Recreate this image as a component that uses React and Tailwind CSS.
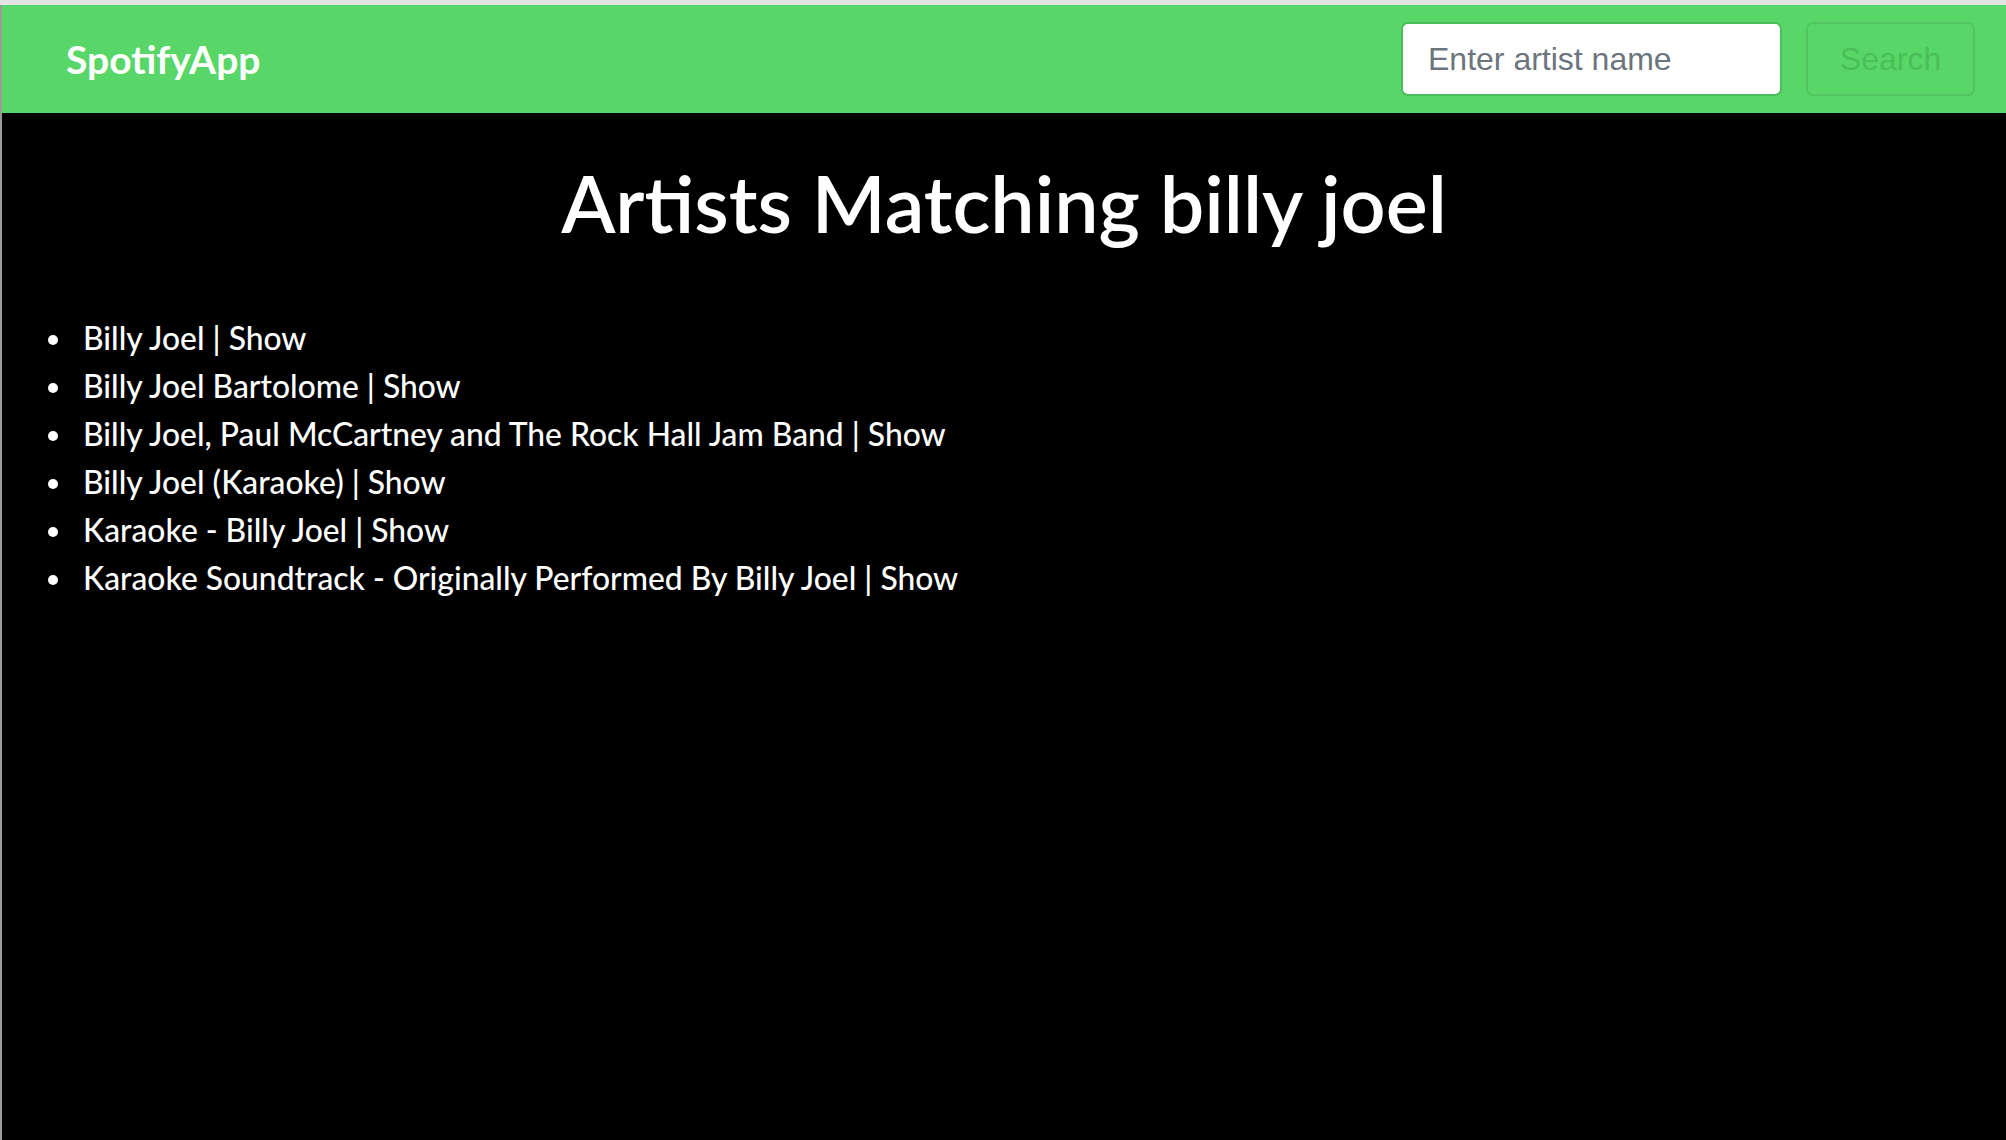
import React from 'react';

const artists = [
  'Billy Joel',
  'Billy Joel Bartolome',
  'Billy Joel, Paul McCartney and The Rock Hall Jam Band',
  'Billy Joel (Karaoke)',
  'Karaoke - Billy Joel',
  'Karaoke Soundtrack - Originally Performed By Billy Joel',
];

const App = () => {
  return (
    <div className="min-h-screen bg-black flex flex-col">
      <div className="h-[5px] bg-[#e3e3e3]" />
      <div className="flex-1 flex flex-col border-l-2 border-[#9a9a9a]">
        {/* Navbar */}
        <nav className="h-[108px] bg-[#58d768] flex items-center justify-between pl-[64px] pr-[31px]">
          <span className="text-white font-bold text-[39px] font-['Lato',sans-serif]">
            SpotifyApp
          </span>
          <div className="flex items-center gap-[24px]">
            <input
              type="text"
              placeholder="Enter artist name"
              className="w-[381px] h-[74px] bg-white rounded-[7px] border-2 border-[#4cbd5c] px-[25px] text-[32px] font-['Liberation_Sans',Arial,sans-serif] text-[#495057] placeholder:text-[#6c757d] outline-none"
            />
            <button className="w-[169px] h-[74px] rounded-[7px] border-2 border-[#4fc660] text-[32px] text-[#49bf59] font-['Liberation_Sans',Arial,sans-serif]">
              Search
            </button>
          </div>
        </nav>

        {/* Results */}
        <main className="font-['Lato',sans-serif] text-white">
          <h1 className="mt-[43px] text-center text-[79px] leading-[1.2] font-semibold">
            Artists Matching billy joel
          </h1>
          <ul className="mt-[63px] list-disc pl-[73px] text-[31.8px] leading-[48px] font-medium">
            {artists.map((name, index) => (
              <li key={index} className="pl-[8px]">
                {name} | <a href="#" className="text-white">Show</a>
              </li>
            ))}
          </ul>
        </main>
      </div>
    </div>
  );
};

export default App;
